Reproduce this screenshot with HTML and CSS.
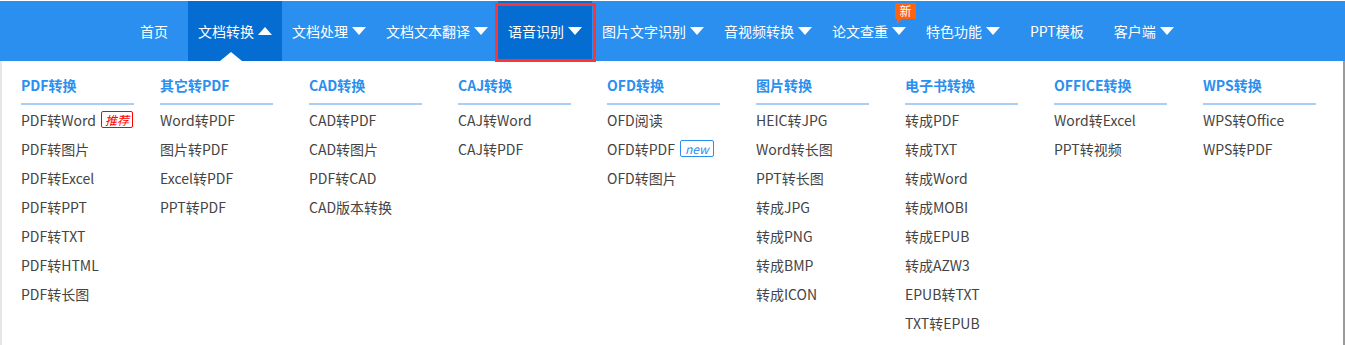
FILE: index.html
```html
<!DOCTYPE html>
<html lang="zh-CN">
<head>
    <meta charset="UTF-8">
    <meta name="viewport" content="width=device-width, initial-scale=1.0">
    <title>文档转换</title>
    <link rel="stylesheet" href="styles.css">
</head>
<body>
    <div class="nav">
        <a class="nav-item wide">首页</a>
        <a class="nav-item active">文档转换<span class="arrow up"></span></a>
        <a class="nav-item">文档处理<span class="arrow"></span></a>
        <a class="nav-item">文档文本翻译<span class="arrow"></span></a>
        <a class="nav-item hover">语音识别<span class="arrow"></span></a>
        <a class="nav-item">图片文字识别<span class="arrow"></span></a>
        <a class="nav-item">音视频转换<span class="arrow"></span></a>
        <a class="nav-item">论文查重<span class="arrow"></span><span class="tag-new">新</span></a>
        <a class="nav-item">特色功能<span class="arrow"></span></a>
        <a class="nav-item wide">PPT模板</a>
        <a class="nav-item">客户端<span class="arrow"></span></a>
    </div>

    <div class="dropdown">
        <div class="col">
            <div class="col-title">PDF转换</div>
            <a class="link">PDF转Word<span class="badge hot">推荐</span></a>
            <a class="link">PDF转图片</a>
            <a class="link">PDF转Excel</a>
            <a class="link">PDF转PPT</a>
            <a class="link">PDF转TXT</a>
            <a class="link">PDF转HTML</a>
            <a class="link">PDF转长图</a>
        </div>
        <div class="col">
            <div class="col-title">其它转PDF</div>
            <a class="link">Word转PDF</a>
            <a class="link">图片转PDF</a>
            <a class="link">Excel转PDF</a>
            <a class="link">PPT转PDF</a>
        </div>
        <div class="col">
            <div class="col-title">CAD转换</div>
            <a class="link">CAD转PDF</a>
            <a class="link">CAD转图片</a>
            <a class="link">PDF转CAD</a>
            <a class="link">CAD版本转换</a>
        </div>
        <div class="col">
            <div class="col-title">CAJ转换</div>
            <a class="link">CAJ转Word</a>
            <a class="link">CAJ转PDF</a>
        </div>
        <div class="col">
            <div class="col-title">OFD转换</div>
            <a class="link">OFD阅读</a>
            <a class="link">OFD转PDF<span class="badge new">new</span></a>
            <a class="link">OFD转图片</a>
        </div>
        <div class="col">
            <div class="col-title">图片转换</div>
            <a class="link">HEIC转JPG</a>
            <a class="link">Word转长图</a>
            <a class="link">PPT转长图</a>
            <a class="link">转成JPG</a>
            <a class="link">转成PNG</a>
            <a class="link">转成BMP</a>
            <a class="link">转成ICON</a>
        </div>
        <div class="col">
            <div class="col-title">电子书转换</div>
            <a class="link">转成PDF</a>
            <a class="link">转成TXT</a>
            <a class="link">转成Word</a>
            <a class="link">转成MOBI</a>
            <a class="link">转成EPUB</a>
            <a class="link">转成AZW3</a>
            <a class="link">EPUB转TXT</a>
            <a class="link">TXT转EPUB</a>
        </div>
        <div class="col">
            <div class="col-title">OFFICE转换</div>
            <a class="link">Word转Excel</a>
            <a class="link">PPT转视频</a>
        </div>
        <div class="col">
            <div class="col-title">WPS转换</div>
            <a class="link">WPS转Office</a>
            <a class="link">WPS转PDF</a>
        </div>
    </div>
</body>
</html>
```

FILE: styles.css
```css
body {
    margin: 0;
    padding: 0;
    background-color: white;
    font-family: "Noto Sans CJK SC", "Noto Sans", sans-serif;
    font-size: 14px;
    overflow: hidden;
}

a {
    text-decoration: none;
    cursor: pointer;
}

.nav {
    display: flex;
    margin-top: 1px;
    height: 60px;
    padding-left: 120px;
    background-color: #2a8fee;
}

.nav-item {
    position: relative;
    display: flex;
    align-items: center;
    padding: 0 10px;
    color: white;
    white-space: nowrap;
}

.nav-item.wide {
    padding: 0 20px;
}

.nav-item.active,
.nav-item.hover {
    background-color: #056dd2;
}

/* little pointer under the open menu */
.nav-item.active::after {
    content: "";
    position: absolute;
    left: 32px;
    bottom: 0;
    border-left: 11px solid transparent;
    border-right: 11px solid transparent;
    border-bottom: 9px solid white;
}

.nav-item.hover::after {
    content: "";
    position: absolute;
    top: 2px;
    bottom: -1px;
    left: -3px;
    right: -4px;
    border: 3px solid #fb3434;
}

.arrow {
    display: inline-block;
    margin-left: 4px;
    width: 0;
    height: 0;
    border-left: 7.5px solid transparent;
    border-right: 7.5px solid transparent;
    border-top: 8px solid white;
}

.arrow.up {
    border-top: none;
    border-bottom: 8px solid white;
}

.tag-new {
    position: absolute;
    top: 2px;
    left: 73px;
    width: 21px;
    height: 16px;
    line-height: 16px;
    font-size: 12px;
    text-align: center;
    color: white;
    background-color: #fe6410;
    border-radius: 1px;
}

.tag-new::after {
    content: "";
    position: absolute;
    left: 2px;
    top: 16px;
    border-right: 5px solid transparent;
    border-top: 5px solid #fe6410;
}

.dropdown {
    display: flex;
    height: 284px;
    padding: 14px 0 0 19px;
    border-left: 2px solid #e6e6e6;
    border-right: 2px solid #9a9a9a;
    box-sizing: border-box;
}

.col {
    display: flex;
    flex-direction: column;
    flex-shrink: 0;
    width: 113px;
    margin-right: 36px;
}

.col:first-child {
    margin-right: 26px;
}

.col:last-child {
    margin-right: 0;
}

.col-title {
    line-height: 20px;
    padding-bottom: 8px;
    border-bottom: 2px solid #a9cef8;
    font-weight: bold;
    color: #2a8fee;
}

.link {
    display: flex;
    align-items: center;
    height: 29px;
    color: #444;
    white-space: nowrap;
}

.badge {
    display: inline-block;
    margin-left: 5px;
    padding: 0 3px;
    height: 15px;
    line-height: 15px;
    font-size: 12px;
    font-style: italic;
    border-radius: 2px;
}

.badge.hot {
    color: #f00;
    border: 1px solid #f00;
}

.badge.new {
    color: #2a8fee;
    border: 1px solid #2a8fee;
    padding: 0 4px;
}
```
